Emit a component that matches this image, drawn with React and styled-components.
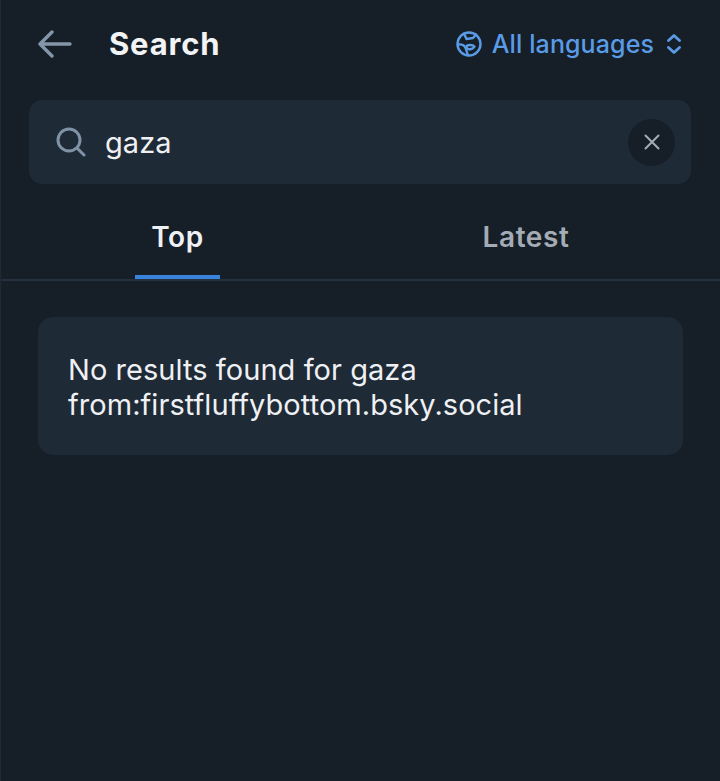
import React from "react";
import styled, { createGlobalStyle } from "styled-components";

const Global = createGlobalStyle`
  html, body { margin: 0; padding: 0; background: #161e27; }
  * { box-sizing: border-box; }
`;

const Page = styled.div`
  width: 720px;
  height: 781px;
  overflow: hidden;
  background: #161e27;
  border-left: 1px solid #1f2a35;
  font-family: Inter, "Liberation Sans", sans-serif;
  color: #f1f3f5;
`;

const Header = styled.header`
  height: 88px;
  display: flex;
  align-items: center;
  padding: 0 39px 0 37px;
`;

const BackButton = styled.div`
  width: 34px;
  height: 28px;
  margin-right: 37px;
  display: flex;
  align-items: center;
  color: #8496a8;
`;

const Title = styled.h1`
  margin: 0;
  flex: 1;
  font-size: 31px;
  line-height: 40px;
  font-weight: 700;
  letter-spacing: 0.8px;
  color: #f1f3f5;
`;

const LangPicker = styled.div`
  display: flex;
  align-items: center;
  gap: 10px;
  color: #5a9be6;
  font-size: 25px;
  font-weight: 500;
  letter-spacing: 0.1px;
`;

const LangLabel = styled.span`
  margin-right: 3px;
`;

const SearchBox = styled.div`
  margin: 12px 29px 0 28px;
  height: 84px;
  border-radius: 13px;
  background: #1e2a36;
  display: flex;
  align-items: center;
  padding: 0 16px 0 27px;
`;

const SearchIcon = styled.div`
  display: flex;
  color: #7f92a6;
  margin-right: 19px;
`;

const Query = styled.span`
  flex: 1;
  font-size: 29px;
  letter-spacing: 0.05px;
  color: #eef0f3;
`;

const ClearButton = styled.div`
  width: 47px;
  height: 47px;
  border-radius: 50%;
  background: #161e27;
  color: #a2acb8;
  display: flex;
  align-items: center;
  justify-content: center;
`;

const Tabs = styled.nav`
  display: grid;
  grid-template-columns: 353px 344px;
  height: 97px;
  border-bottom: 2px solid #24313e;
`;

const Tab = styled.div`
  display: flex;
  flex-direction: column;
  align-items: center;
`;

const TabLabel = styled.div`
  height: 95px;
  padding: 35px 16px 0;
  display: flex;
  align-items: flex-start;
  font-size: 28px;
  line-height: 36px;
  font-weight: 600;
  letter-spacing: 0.6px;
  color: ${(p) => (p.$active ? "#eef0f3" : "#a3abb5")};
  border-bottom: 4px solid ${(p) => (p.$active ? "#3a83dc" : "transparent")};
`;

const Message = styled.div`
  margin: 36px 37px 0 37px;
  height: 138px;
  border-radius: 15px;
  background: #1e2a36;
  padding: 35px 30px;
  font-size: 29px;
  line-height: 35px;
  letter-spacing: 0.05px;
  color: #eef0f3;
`;

export default function App() {
  return (
    <>
      <Global />
      <Page>
        <Header>
          <BackButton>
            <svg width="34" height="28" viewBox="0 0 34 28" fill="none" stroke="currentColor" strokeWidth="3.4" strokeLinecap="round" strokeLinejoin="round">
              <path d="M2 14h30M14 2 2 14l12 12" />
            </svg>
          </BackButton>
          <Title>Search</Title>
          <LangPicker>
            <svg width="26" height="26" viewBox="0 0 26 26" fill="none" stroke="currentColor" strokeWidth="2.4" strokeLinecap="round" strokeLinejoin="round">
              <circle cx="13" cy="13" r="11.5" />
              <path d="M8 2.500 10.500 8 17 7l3-3.500" />
              <path d="M2 13.500c3-.5 5.500 0 7 2.500s1.500 5 3 8" />
              <path d="M10.500 15c2-1.500 6-1.500 8 .5-1.500 2.500-4.500 3-6.500 2.500-1-.5-1.500-2-1.500-3z" />
            </svg>
            <LangLabel>All languages</LangLabel>
            <svg width="14" height="20" viewBox="0 0 14 20" fill="none" stroke="currentColor" strokeWidth="2.800" strokeLinecap="round" strokeLinejoin="round">
              <path d="M1.500 6.500 7 1.500l5.500 5M1.500 13.500 7 18.500l5.500-5" />
            </svg>
          </LangPicker>
        </Header>
        <SearchBox>
          <SearchIcon>
            <svg width="30" height="30" viewBox="0 0 30 30" fill="none" stroke="currentColor" strokeWidth="3" strokeLinecap="round">
              <circle cx="13" cy="13" r="11" />
              <path d="M21 21l7 7" />
            </svg>
          </SearchIcon>
          <Query>gaza</Query>
          <ClearButton>
            <svg width="16" height="16" viewBox="0 0 16 16" fill="none" stroke="currentColor" strokeWidth="2" strokeLinecap="round">
              <path d="M1.500 1.500l13 13M14.500 1.500l-13 13" />
            </svg>
          </ClearButton>
        </SearchBox>
        <Tabs>
          <Tab><TabLabel $active>Top</TabLabel></Tab>
          <Tab><TabLabel>Latest</TabLabel></Tab>
        </Tabs>
        <Message>
          No results found for gaza
          <br />
          from:firstfluffybottom.bsky.social
        </Message>
      </Page>
    </>
  );
}
